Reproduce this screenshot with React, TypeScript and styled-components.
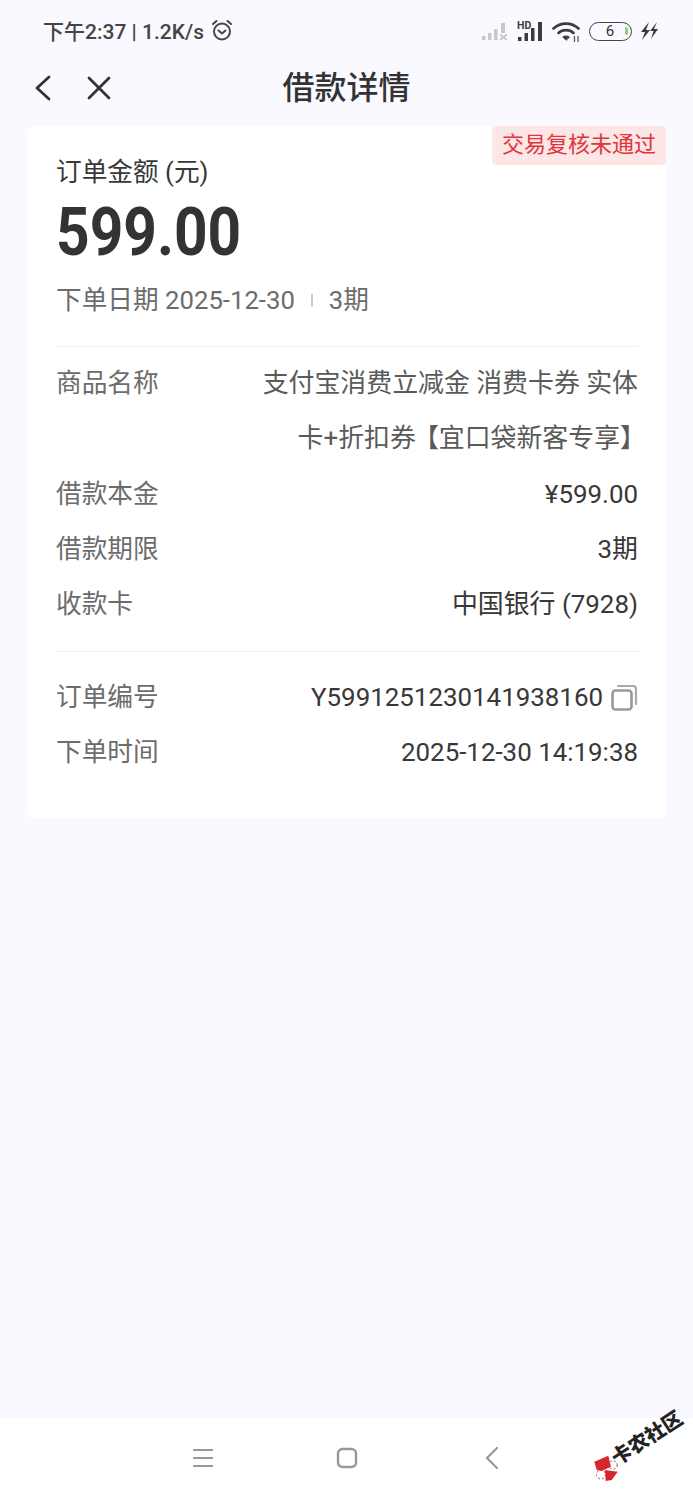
import React from 'react';
import styled, { createGlobalStyle } from 'styled-components';

const GlobalStyles = createGlobalStyle`
    html, body {
        margin: 0;
        padding: 0;
        background: #f9f9ff;
    }
    * {
        box-sizing: border-box;
    }
`;

const Page = styled.div`
    position: relative;
    width: 693px;
    height: 1500px;
    display: flex;
    flex-direction: column;
    background: #f9f9ff;
    color: #333;
    font-family: Roboto, 'Noto Sans CJK SC', sans-serif;
    overflow: hidden;
`;

const StatusBar = styled.div`
    height: 60px;
    padding: 16px 35px 0 43px;
    display: flex;
    justify-content: space-between;
    align-items: flex-start;
`;
const StatusLeft = styled.div`
    display: flex;
    align-items: center;
    gap: 6px;
    height: 28px;
    font-size: 21px;
    font-weight: 500;
    color: #444;
    white-space: nowrap;
`;
const StatusRight = styled.div`
    display: flex;
    align-items: center;
    gap: 8.5px;
    height: 30px;
`;
const Battery = styled.div`
    position: relative;
    width: 43px;
    height: 19px;
    border: 1.5px solid #444;
    border-radius: 9.5px;
    font-size: 15px;
    font-weight: 400;
    line-height: 16px;
    text-align: center;
    color: #333;
    &::after {
        content: '';
        position: absolute;
        right: 3px;
        top: 4px;
        width: 3px;
        height: 8px;
        border-radius: 2px;
        background: #8fce7c;
    }
`;

const NavBar = styled.div`
    position: relative;
    height: 56px;
    padding-left: 33px;
    display: flex;
    align-items: center;
    gap: 30px;
`;
const NavTitle = styled.h1`
    position: absolute;
    left: 0;
    right: 0;
    top: 0;
    margin: 0;
    line-height: 56px;
    text-align: center;
    font-size: 32px;
    font-weight: 500;
    color: #333;
`;

const Card = styled.div`
    position: relative;
    margin: 10px 27px 0 28px;
    height: 692px;
    padding: 24px 28px 0;
    background: #fff;
    border-radius: 6px;
`;
const StatusTag = styled.div`
    position: absolute;
    top: 0;
    right: 0;
    height: 39px;
    padding: 0 10px;
    background: #fde6e6;
    border-radius: 4px;
    color: #e0343a;
    font-size: 22px;
    line-height: 38px;
`;
const AmountLabel = styled.div`
    font-size: 25.7px;
    line-height: 44px;
    color: #383838;
`;
const Amount = styled.div`
    height: 70px;
    font-size: 67px;
    line-height: 76px;
    font-weight: 700;
    color: #333;
    transform: scaleX(0.875);
    transform-origin: left center;
`;
const Meta = styled.div`
    margin-top: 14px;
    display: flex;
    align-items: center;
    font-size: 25.7px;
    line-height: 44px;
    color: #6c6c6c;
`;
const MetaBar = styled.span`
    width: 2px;
    height: 13px;
    margin: 0 16px;
    background: #ccc;
`;
const Divider = styled.div<{ $top: number }>`
    height: 1px;
    background: #efeff2;
    margin-top: ${(props) => props.$top}px;
`;
const Rows = styled.div<{ $top: number }>`
    padding-top: ${(props) => props.$top}px;
    padding-bottom: 18.5px;
`;
const Row = styled.div`
    display: flex;
    justify-content: space-between;
    font-size: 25.7px;
    line-height: 55.3px;
`;
const RowLabel = styled.div`
    flex: none;
    color: #6c6c6c;
`;
const RowValue = styled.div`
    width: 420px;
    display: flex;
    justify-content: flex-end;
    align-items: center;
    gap: 8px;
    font-size: 25.9px;
    text-align: right;
    color: #383838;
`;
const ProductValue = styled(RowValue)`
    display: block;
    width: 390px;
    color: #5a5a5a;
`;
const ProductLine = styled.div`
    white-space: nowrap;
`;
const OpenBracket = styled.span`
    font-feature-settings: 'halt';
    padding-left: 10px;
`;
const CloseBracket = styled.span`
    font-feature-settings: 'halt';
    padding-right: 5px;
`;

const Spacer = styled.div`
    flex: 1;
`;

const BottomBar = styled.div`
    height: 82px;
    background: #fff;
    display: grid;
    grid-template-columns: 143px 145px 146px;
    justify-content: center;
    align-items: center;
    justify-items: center;
    padding-left: 3px;
    padding-bottom: 2px;
`;

const Watermark = styled.div`
    position: absolute;
    left: 590px;
    top: 1408px;
    width: 100px;
    height: 80px;
`;
const WatermarkLogo = styled.svg`
    position: absolute;
    left: 2px;
    top: 46px;
`;
const WatermarkText = styled.span`
    position: absolute;
    left: 17px;
    top: 17px;
    transform: rotate(-33deg);
    font-size: 20px;
    line-height: 26px;
    font-weight: 900;
    color: #222;
    white-space: nowrap;
`;

const App: React.FC = () => {
    return (
        <Page>
            <GlobalStyles />
            <StatusBar>
                <StatusLeft>
                    <span>下午2:37 | 1.2K/s</span>
                    <svg width="24" height="24" viewBox="0 0 24 24" fill="none" stroke="#444" strokeWidth="2" strokeLinecap="round" strokeLinejoin="round">
                        <circle cx="12" cy="13.5" r="8" />
                        <path d="M8.5 12.5l3.5 3 3.5-3" />
                        <path d="M3 6l3.5-3M21 6l-3.5-3" />
                    </svg>
                </StatusLeft>
                <StatusRight>
                    <svg width="26" height="19" viewBox="0 0 26 19" fill="#c8c8cc">
                        <rect x="0" y="14" width="3.500" height="4" />
                        <rect x="6" y="11" width="3.500" height="7" />
                        <rect x="12" y="7" width="3.500" height="11" />
                        <rect x="19" y="1" width="4" height="10" />
                        <path d="M18 12.500l7 5.500M25 12.500l-7 5.500" stroke="#c8c8cc" strokeWidth="1.800" />
                    </svg>
                    <svg width="27" height="26" viewBox="0 -3 27 26" fill="#3c3c40">
                        <text x="0" y="8" fontSize="10.500" fontWeight="700" fontFamily="Roboto, sans-serif">HD</text>
                        <rect x="1" y="16" width="3.500" height="4" />
                        <rect x="7.500" y="12" width="3.500" height="8" />
                        <rect x="14" y="7" width="3.500" height="13" />
                        <rect x="21" y="1" width="4" height="19" />
                    </svg>
                    <svg width="28" height="21" viewBox="0 0 28 21" fill="none" stroke="#3c3c40" strokeWidth="2.600" strokeLinecap="round">
                        <path d="M1.500 7.500C8.500 1 19.500 1 26.500 7.500" />
                        <path d="M6.500 12C10.500 8.200 17.500 8.200 21.500 12" />
                        <path d="M14 19l-3.200-3c1.800-1.400 4.600-1.400 6.400 0z" fill="#3c3c40" strokeWidth="1" />
                        <path d="M22.500 15.500v5M26 15.500v5" strokeWidth="1.300" stroke="#555" />
                    </svg>
                    <Battery>6</Battery>
                    <svg width="18" height="20" viewBox="0 0 18 20" fill="#3c3c40">
                        <path d="M9 1L1 11h4l-3 8 8-10H6zM17 1l-7 9h3.500l-2.500 8 7-10h-4z" />
                    </svg>
                </StatusRight>
            </StatusBar>
            <NavBar>
                <NavTitle>借款详情</NavTitle>
                <svg width="22" height="30" viewBox="0 0 22 30" fill="none" stroke="#333" strokeWidth="2.800" strokeLinecap="round" strokeLinejoin="round">
                    <path d="M16 4L4 15l12 11" />
                </svg>
                <svg width="28" height="28" viewBox="0 0 28 28" fill="none" stroke="#333" strokeWidth="2.800" strokeLinecap="round">
                    <path d="M4 4l20 20M24 4L4 24" />
                </svg>
            </NavBar>
            <Card>
                <StatusTag>交易复核未通过</StatusTag>
                <AmountLabel>订单金额 (元)</AmountLabel>
                <Amount>599.00</Amount>
                <Meta>
                    下单日期 2025-12-30
                    <MetaBar />
                    3期
                </Meta>
                <Divider $top={24} />
                <Rows $top={9}>
                    <Row>
                        <RowLabel>商品名称</RowLabel>
                        <ProductValue>
                            <ProductLine>支付宝消费立减金 消费卡券 实体</ProductLine>
                            <ProductLine>
                                卡+折扣券
                                <OpenBracket>【</OpenBracket>
                                宜口袋新客专享
                                <CloseBracket>】</CloseBracket>
                            </ProductLine>
                        </ProductValue>
                    </Row>
                    <Row>
                        <RowLabel>借款本金</RowLabel>
                        <RowValue>¥599.00</RowValue>
                    </Row>
                    <Row>
                        <RowLabel>借款期限</RowLabel>
                        <RowValue>3期</RowValue>
                    </Row>
                    <Row>
                        <RowLabel>收款卡</RowLabel>
                        <RowValue>中国银行 (7928)</RowValue>
                    </Row>
                </Rows>
                <Divider $top={0} />
                <Rows $top={18}>
                    <Row>
                        <RowLabel>订单编号</RowLabel>
                        <RowValue>
                            Y5991251230141938160
                            <svg width="27" height="27" viewBox="0 0 27 27" fill="none" stroke="#999" strokeWidth="2.600" strokeLinejoin="round">
                                <rect x="1.500" y="6.500" width="19" height="19" rx="3" />
                                <path d="M7 2h15a3 3 0 0 1 3 3v15" strokeLinecap="round" strokeWidth="2.200" stroke="#aaa" />
                            </svg>
                        </RowValue>
                    </Row>
                    <Row>
                        <RowLabel>下单时间</RowLabel>
                        <RowValue>2025-12-30 14:19:38</RowValue>
                    </Row>
                </Rows>
            </Card>
            <Spacer />
            <BottomBar>
                <svg width="20" height="20" viewBox="0 0 20 20" fill="none" stroke="#999" strokeWidth="2.200">
                    <path d="M0 2h20M0 10h20M0 18h20" />
                </svg>
                <svg width="22" height="22" viewBox="0 0 22 22" fill="none" stroke="#999" strokeWidth="2.400">
                    <rect x="2" y="2" width="18" height="18" rx="4.500" />
                </svg>
                <svg width="16" height="24" viewBox="0 0 16 24" fill="none" stroke="#999" strokeWidth="2.200" strokeLinecap="round">
                    <path d="M13 2L3 12l10 10" />
                </svg>
            </BottomBar>
            <Watermark>
                <WatermarkLogo width="26" height="28" viewBox="0 0 26 28">
                    <circle cx="21" cy="11" r="4.200" fill="#fff" stroke="#8a4a6a" strokeWidth="1" strokeDasharray="2 2" />
                    <circle cx="9" cy="20.500" r="4.500" fill="#fff" stroke="#8a4a6a" strokeWidth="1" strokeDasharray="2 2" />
                    <path d="M2.300 7.700L16.300 1.700 19 12.700 9.700 17 4.700 16z" fill="#d9262c" />
                    <path d="M13 16L25.700 17.700 19.700 26 13.700 27z" fill="#d9262c" />
                </WatermarkLogo>
                <WatermarkText>卡农社区</WatermarkText>
            </Watermark>
        </Page>
    );
};

export default App;
